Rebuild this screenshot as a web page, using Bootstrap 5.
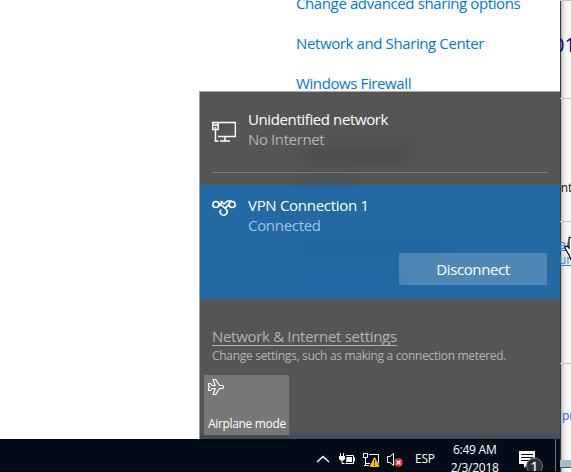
<!DOCTYPE html>
<html lang="en">
<head>
<meta charset="utf-8">
<meta name="viewport" content="width=device-width, initial-scale=1">
<title>Network flyout</title>
<link href="https://cdn.jsdelivr.net/npm/bootstrap@5.3.0/dist/css/bootstrap.min.css" rel="stylesheet">
<style>
body{font-family:"Open Sans","Noto Sans",sans-serif;font-size:15px;line-height:20px;width:571px;height:472px}
.desktop{width:571px;height:472px}
.screen{width:560px}
.settings-pane{height:439px;padding-left:296px}
.settings-pane a{color:#0078d7;height:20px;margin-bottom:20px;white-space:nowrap}
.settings-pane a:first-child{margin-top:-7px}
.flyout{left:199px;top:91px;width:361px;height:348px;background:linear-gradient(#555 0 95%,#50565b 98%,#3f4a53);border-top:1px solid #a8adac;border-left:1px solid #a0a0a0;color:#fff}
.entry{padding-left:12px;gap:12px;white-space:nowrap}
.entry-first{height:80px;padding-top:17px}
.split{height:1px;background:#7c7c7c;margin:0 12px}
.entry-vpn{height:114px;margin-top:12px;padding:10px 13px 14px 12px;background:#2369a3}
.soft{color:#b3b3b3}
.soft-blue{color:#a4c2dc}
.btn-vpn{width:148px;height:32px;background:#5088b5;color:#fff;border-radius:0;border:0;font-size:15px;line-height:32px;padding:0}
.more{padding:27px 0 0 12px;height:76px;color:#b3b3b3;white-space:nowrap}
.more a{color:#b3b3b3;display:block;text-underline-offset:3px;text-decoration-thickness:1px}
.more small{font-size:12px;line-height:18px;display:block;margin-top:1px}
.tile{width:85px;height:60px;background:#777;margin-left:4px;padding:4px 4px 3px;font-size:12px;line-height:16px;white-space:nowrap}
.ghost{filter:blur(6px);height:12px;opacity:.2;background:#222}
.g1{left:104px;top:56px;width:104px}
.g2{left:100px;top:85px;width:52px;background:#123e62;height:8px}
.g3{left:100px;top:150px;width:142px;opacity:.12;background:#0d3f75}
.g4{left:98px;top:180px;width:110px;opacity:.14;background:#005c9e}
.taskbar{height:33px;background:#010c18;border-bottom:1px solid #000;color:#fff;font-size:12px;line-height:18px}
.tray{padding-left:316px}
.lang{margin:11px 0 0 1px}
.clock{width:64px;margin:2px 0 0 8px;white-space:nowrap}
.peek{width:1px;background:#6a7179;margin-right:4px}
.behind{width:11px;background:linear-gradient(90deg,#3c3c3c 0 1px,#b4b4b4 1px,#dedede 3px,#f5f5f5 6px,#fcfcfc);font-size:12px}
.behind .rule{height:1px;background:#c4c4c4}
.behind .bit{overflow:hidden;white-space:nowrap}
.heading-bit{height:97px;padding-top:34px;font-size:20px;color:#00008b;text-indent:-7px}
.body-bit{height:122px;padding-top:79px;color:#111;text-indent:-6px}
.link-bit{height:141px;padding-top:15px;color:#2b7be0;line-height:15px}
.link-up{margin-left:-8px}
.link-down{margin-left:-1px}
.low-bit{height:96px;padding-top:42px;color:#1265d8;text-indent:2px}
.edge-bit{height:8px;background:#a9bcc2;border-bottom:1px solid #44545c}
.pointer{left:564px;top:235px}
.t1{letter-spacing:-.39px}.tn{letter-spacing:-.31px}.t0{letter-spacing:-.3px}.t2{letter-spacing:-.25px}.t3{letter-spacing:-.3px}
.tile-label{letter-spacing:-.33px}
svg{display:block;flex:none}
</style>
<script src="https://cdn.jsdelivr.net/npm/bootstrap@5.3.0/dist/js/bootstrap.bundle.min.js"></script>
</head>
<body class="bg-white overflow-hidden">
<div class="desktop d-flex position-relative overflow-hidden">
  <div class="screen d-flex flex-column">
    <main class="settings-pane d-flex flex-column bg-white overflow-hidden">
      <a href="#" class="text-decoration-none t1">Change advanced sharing options</a>
      <a href="#" class="text-decoration-none t1">Network and Sharing Center</a>
      <a href="#" class="text-decoration-none t1">Windows Firewall</a>
    </main>
    <footer class="taskbar d-flex">
      <div class="tray d-flex">
        <svg width="98" height="32" viewBox="316 439 98 32" fill="none" stroke="#fff">
          <path d="M317 462l6-5.500 6 5.500" stroke-width="1.500"/>
          <path d="M340.500 453v3M343.500 453v3" />
          <path d="M339 456h6v3l-1.500 1.500h-3L339 459z" fill="#fff" stroke="none"/>
          <path d="M342 459.500v4h2.500M346 455.500h7.500v8H345.500M354.500 457.500v4" />
          <path d="M346.500 457h5.500v5h-6z" fill="#fff" stroke="none"/>
          <path d="M369 454.500h9.500v9M363.500 453.500h4v4h-4zM365.500 458v7.500M364 465.500h5M366 463.500h4" />
          <path d="M374.500 457.500l4.500 9h-9z" fill="#ffc40d" stroke="#f7b500"/>
          <path d="M374.500 460v3.500M374.500 464.500v1.500" stroke="#222"/>
          <path d="M387.500 456.500h2.500l3.500-3v12l-3.500-3h-2.500z"/>
          <circle cx="398.500" cy="462.500" r="4.500" fill="#d8232e" stroke="none"/>
          <path d="M396.500 460.500l4 4m0-4l-4 4" stroke-width="1.400"/>
        </svg>
      </div>
      <span class="t2 lang">ESP</span>
      <div class="clock text-center t2">6:49 AM<br>2/3/2018</div>
      <svg class="ms-auto" width="39" height="32" viewBox="516 439 39 32">
        <path d="M519 451h16v13h-7l-4 4v-4h-5z" fill="#fff"/>
        <path d="M521 454.500h12M521 457.500h12M521 460.500h8" stroke="#010c18"/>
        <circle cx="534.500" cy="466" r="8" fill="#2b3036" stroke="#777"/>
        <text x="534.500" y="470.500" text-anchor="middle" fill="#fff" stroke="#fff" stroke-width=".3" font-size="13">1</text>
      </svg>
      <div class="peek flex-shrink-0"></div>
    </footer>
  </div>

  <aside class="behind d-flex flex-column overflow-hidden">
    <div class="rule"></div>
    <div class="bit heading-bit">01</div>
    <div class="rule"></div>
    <div class="bit body-bit">ent</div>
    <div class="rule"></div>
    <div class="bit link-bit text-decoration-underline"><div class="link-up">uar</div><div class="link-down">ura</div></div>
    <div class="rule"></div>
    <div class="bit low-bit">pr</div>
    <div class="edge-bit"></div>
  </aside>

  <section class="flyout position-absolute">
    <div class="ghost g1 position-absolute"></div>
    <div class="entry entry-first d-flex position-relative">
      <svg width="24" height="42" viewBox="212 109 24 42" fill="none" stroke="#fff" stroke-width="1.500">
        <path d="M219 122.600h16.400v13.900H218M225 137v4M220 141h10M212.700 122.600h5.400v2.400h-5.400zM212.700 125v4.500h5.400V125M215.500 127v14M214.500 141h4"/>
      </svg>
      <div><div class="t1">Unidentified network</div><div class="soft t1">No Internet</div></div>
    </div>
    <div class="split"></div>
    <div class="entry-vpn d-flex flex-column justify-content-between">
      <div class="entry d-flex ps-0">
        <svg width="24" height="24" viewBox="0 0 24 24" fill="none" stroke="#fff" stroke-width="1.600">
          <circle cx="3.900" cy="9.500" r="3"/><circle cx="20.100" cy="9.500" r="3"/>
          <path d="M6.300 11.300L10.800 6.500M14 7.200L15.800 6h4M13.500 13l4.200-5M17.800 11.500l-2-1.500M6.500 8l7.700 6.200A3.500 3.500 0 1 1 9 14.400M8.500 6l3.500 3 3.500-3"/>
        </svg>
        <div><div class="t0">VPN Connection 1</div><div class="soft-blue t0">Connected</div></div>
      </div>
      <button class="btn btn-vpn align-self-end t1" type="button">Disconnect</button>
    </div>
    <div class="ghost g2 position-absolute"></div>
    <div class="ghost g3 position-absolute"></div>
    <div class="ghost g4 position-absolute"></div>
    <div class="more"><a href="#" class="tn">Network &amp; Internet settings</a><small class="t3">Change settings, such as making a connection metered.</small></div>
    <div class="tile d-flex flex-column justify-content-between">
      <svg width="18" height="18" viewBox="208 379 18 18" fill="none" stroke="#fff" stroke-width="1.200">
        <path d="M208.600 383.500h2l1.500 2h3l-2-6h2.500l4 6h2.500q1.400 0 1.400 1.500t-1.400 1.500h-2.500l-4 6h-2.500l2-6h-3l-1.500 2h-2v-2.500l1-1-1-1z"/>
      </svg>
      <span class="tile-label">Airplane mode</span>
    </div>
  </section>

  <svg class="pointer position-absolute" width="7" height="28" viewBox="0 0 7 28"><path d="M7 2L5 3v10L3 11Q0 11 1.500 14L5 20l2 5" fill="#fff" stroke="#000" stroke-width="1.200"/></svg>
</div>
</body>
</html>
